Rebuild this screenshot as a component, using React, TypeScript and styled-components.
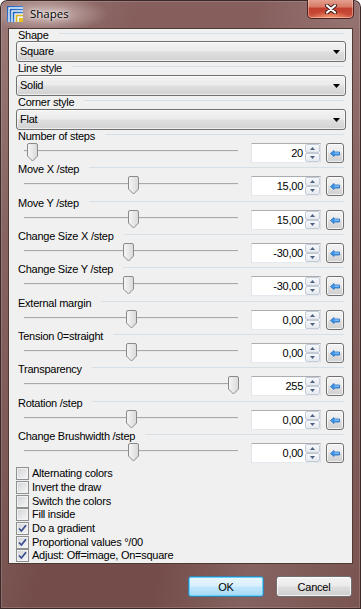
import React from "react";
import styled, { createGlobalStyle } from "styled-components";

const Global = createGlobalStyle`
  html, body { margin: 0; padding: 0; background: #ffffff; }
  * { box-sizing: border-box; }
`;

const UI_FONT = `"Liberation Sans", Arial, sans-serif`;

const Window = styled.div`
  position: relative;
  width: 361px;
  height: 609px;
  display: flex;
  flex-direction: column;
  border-radius: 7px 7px 0 0;
  overflow: hidden;
  background:
    radial-gradient(ellipse 60px 18px at 48px 14px, rgba(235, 220, 218, 0.7), rgba(235, 220, 218, 0) 100%),
    linear-gradient(100deg, rgba(255,255,255,0.16) 0%, rgba(255,255,255,0) 30%, rgba(255,255,255,0) 55%, rgba(255,255,255,0.12) 75%, rgba(255,255,255,0.04) 100%),
    linear-gradient(180deg, #87605e 0%, #77504d 40%, #744d4a 100%);
  box-shadow: inset 0 0 0 1px #3b2927, inset 0 0 0 2px rgba(255, 255, 255, 0.15);
`;

const TitleBar = styled.div`
  height: 28px;
  display: flex;
  align-items: flex-start;
  flex: none;
`;

const AppIcon = styled.svg`
  width: 16px;
  height: 16px;
  margin: 6px 0 0 7px;
  flex: none;
`;

const Title = styled.div`
  margin: 6px 0 0 7px;
  font-family: "Open Sans", "Noto Sans", sans-serif;
  font-size: 11.5px;
  line-height: 16px;
  color: #000;
  text-shadow: 0 0 6px rgba(255, 255, 255, 0.9), 0 0 3px rgba(255, 255, 255, 0.9);
`;

const CloseButton = styled.div`
  margin-left: auto;
  margin-right: 7px;
  width: 47px;
  height: 20px;
  margin-top: -1px;
  border: 1px solid #4e2422;
  border-top: none;
  border-radius: 0 0 5px 5px;
  background:
    radial-gradient(ellipse 20px 7px at 50% 100%, rgba(255, 170, 120, 0.8), rgba(255, 170, 120, 0)),
    linear-gradient(180deg, #e6a595 0%, #d87b68 40%, #c2402f 50%, #c84a36 80%, #d66650 100%);
  box-shadow: inset 0 0 0 1px rgba(255, 220, 210, 0.45);
  display: flex;
  align-items: center;
  justify-content: center;
`;

const Client = styled.div`
  margin: 0 8px;
  height: 536px;
  flex: none;
  border: 1px solid #4f3937;
  background: #f0f0f0;
  display: flex;
  flex-direction: column;
`;

const LabelRow = styled.div<{ $h: number }>`
  height: ${(p) => p.$h}px;
  display: flex;
  align-items: center;
  padding: 0 8px 0 9px;
  flex: none;
`;

const Label = styled.span`
  font-family: ${UI_FONT};
  font-size: 11px;
  line-height: 13px;
  letter-spacing: -0.25px;
  color: #000;
  white-space: nowrap;
`;

const Rule = styled.div`
  flex: 1;
  height: 1px;
  margin-left: 10px;
  margin-bottom: 4px;
  background: #d5dfe5;
`;

const ComboRow = styled.div`
  height: 21px;
  padding: 0 6px 0 7px;
  flex: none;
`;

const Combo = styled.div`
  height: 21px;
  border: 1px solid #707070;
  border-radius: 3px;
  background: linear-gradient(180deg, #f3f3f3 0%, #ebebeb 45%, #dedede 55%, #d2d2d2 100%);
  box-shadow: inset 0 0 0 1px rgba(255, 255, 255, 0.6);
  display: flex;
  align-items: center;
  padding: 0 5px 0 3px;
`;

const ComboText = styled(Label)`
  flex: 1;
`;

const Section = styled.div<{ $h: number }>`
  height: ${(p) => p.$h}px;
  flex: none;
  display: flex;
  flex-direction: column;
`;

const ControlRow = styled.div`
  height: 20px;
  display: flex;
  align-items: flex-start;
  padding-left: 13px;
`;

const SliderBox = styled.div`
  position: relative;
  width: 218px;
  height: 20px;
  flex: none;
`;

const Track = styled.div`
  position: absolute;
  left: 2px;
  right: 2px;
  top: 7px;
  height: 2px;
  border-top: 1px solid #a9a9a9;
  border-bottom: 1px solid #e8e8e8;
`;

const ThumbSvg = styled.svg`
  position: absolute;
  top: 0;
  width: 11px;
  height: 19px;
`;

const SpinBox = styled.div`
  margin-left: 11px;
  width: 70px;
  height: 20px;
  flex: none;
  display: flex;
  background: #fff;
  border: 1px solid;
  border-color: #abadb3 #dbdfe6 #e3e9ef #e2e3ea;
`;

const SpinValue = styled(Label)`
  flex: 1;
  text-align: right;
  line-height: 18px;
  padding-right: 2px;
`;

const SpinButtons = styled.div`
  width: 15px;
  display: flex;
  flex-direction: column;
`;

const SpinButton = styled.div`
  flex: 1;
  border: 1px solid #c3cbd6;
  border-radius: 2px;
  background: linear-gradient(180deg, #f7f8fa 0%, #e6e9ee 100%);
  display: flex;
  align-items: center;
  justify-content: center;
`;

const ResetButton = styled.div`
  margin-left: 5px;
  width: 18px;
  height: 20px;
  flex: none;
  border: 1px solid #707070;
  border-radius: 3px;
  background: linear-gradient(180deg, #f3f3f3 0%, #ebebeb 45%, #dedede 55%, #d0d0d0 100%);
  box-shadow: inset 0 0 0 1px rgba(255, 255, 255, 0.7);
  display: flex;
  align-items: center;
  justify-content: center;
`;

const Checks = styled.div`
  padding-top: 3px;
  display: flex;
  flex-direction: column;
`;

const CheckRow = styled.div<{ $h: number }>`
  height: ${(p) => p.$h}px;
  display: flex;
  align-items: flex-start;
  padding-left: 7px;
`;

const CheckBox = styled.div`
  margin-top: 1px;
  width: 13px;
  height: 13px;
  flex: none;
  border: 1px solid #8e8f8f;
  background: linear-gradient(135deg, #cfd2d6 0%, #e4e5e7 50%, #f7f7f7 100%);
  box-shadow: inset 0 0 0 1px #f2f2f2;
  display: flex;
  align-items: center;
  justify-content: center;
`;

const CheckLabel = styled(Label)`
  margin-left: 3px;
  margin-top: 1px;
`;

const Footer = styled.div`
  flex: 1;
  display: flex;
  justify-content: flex-end;
  align-items: flex-start;
  gap: 12px;
  padding: 12px 9px 0 0;
`;

const DialogButton = styled.div<{ $default?: boolean }>`
  width: 76px;
  height: 21px;
  border: 1px solid ${(p) => (p.$default ? "#3c7fb1" : "#707070")};
  border-radius: 3px;
  background: ${(p) =>
    p.$default
      ? "linear-gradient(180deg, #eaf6fd 0%, #d9f0fc 45%, #bee6fd 55%, #a7d9f5 100%)"
      : "linear-gradient(180deg, #f3f3f3 0%, #ebebeb 45%, #dddddd 55%, #cfcfcf 100%)"};
  box-shadow: inset 0 0 0 1px ${(p) => (p.$default ? "#5fd3ff" : "rgba(255,255,255,0.7)")};
  display: flex;
  align-items: center;
  justify-content: center;
  font-family: ${UI_FONT};
  font-size: 11px;
  letter-spacing: -0.2px;
  color: #000;
`;

const ArrowDown = () => (
  <svg width="7" height="4" viewBox="0 0 7 4">
    <polygon points="0,0 7,0 3.5,4" fill="#000" />
  </svg>
);

const Thumb = ({ left }: { left: number }) => (
  <ThumbSvg viewBox="0 0 11 19" style={{ left }}>
    <defs>
      <linearGradient id="tg" x1="0" y1="0" x2="1" y2="0">
        <stop offset="0" stopColor="#f6f6f6" />
        <stop offset="1" stopColor="#d9d9d9" />
      </linearGradient>
    </defs>
    <path
      d="M0.5,2 Q0.5,0.5 2,0.5 H9 Q10.5,0.5 10.5,2 V13 L5.5,18 L0.5,13 Z"
      fill="url(#tg)"
      stroke="#8a8a8a"
    />
  </ThumbSvg>
);

const SpinArrow = ({ up }: { up?: boolean }) => (
  <svg width="5" height="3" viewBox="0 0 5 3">
    <polygon points={up ? "0,3 5,3 2.5,0" : "0,0 5,0 2.5,3"} fill="#4d6185" />
  </svg>
);

const ResetIcon = () => (
  <svg width="10" height="7" viewBox="0 0 10 7">
    <path d="M0.5,3.5 L4,0.5 V2 H9.5 V5 H4 V6.5 Z" fill="#3d95e8" stroke="#2a6fbf" strokeWidth="0.8" />
    <rect x="4.5" y="2.6" width="4.5" height="1" fill="#a7d3ff" />
  </svg>
);

const CheckMark = () => (
  <svg width="9" height="9" viewBox="0 0 9 9">
    <path d="M1,4.5 L3.4,7 L8,1.2" fill="none" stroke="#3b4f8f" strokeWidth="1.8" />
  </svg>
);

const sliders = [
  { label: "Number of steps", frac: 0, value: "20", h: 33 },
  { label: "Move X /step", frac: 0.5, value: "15,00", h: 34 },
  { label: "Move Y /step", frac: 0.5, value: "15,00", h: 33 },
  { label: "Change Size X /step", frac: 0.48, value: "-30,00", h: 33 },
  { label: "Change Size Y /step", frac: 0.48, value: "-30,00", h: 34 },
  { label: "External margin", frac: 0.495, value: "0,00", h: 33 },
  { label: "Tension 0=straight", frac: 0.495, value: "0,00", h: 33 },
  { label: "Transparency", frac: 1, value: "255", h: 34 },
  { label: "Rotation /step", frac: 0.495, value: "0,00", h: 33 },
  { label: "Change Brushwidth /step", frac: 0.5, value: "0,00", h: 33 },
];

const checks = [
  { label: "Alternating colors", on: false, h: 14 },
  { label: "Invert the draw", on: false, h: 14 },
  { label: "Switch the colors", on: false, h: 13 },
  { label: "Fill inside", on: false, h: 14 },
  { label: "Do a gradient", on: true, h: 14 },
  { label: "Proportional values °/00", on: true, h: 13 },
  { label: "Adjust: Off=image, On=square", on: true, h: 14 },
];

const combos = [
  { label: "Shape", value: "Square", h: 12 },
  { label: "Line style", value: "Solid", h: 13 },
  { label: "Corner style", value: "Flat", h: 13 },
];

export default function App() {
  return (
    <>
      <Global />
      <Window>
        <TitleBar>
          <AppIcon viewBox="0 0 16 16">
            <defs>
              <linearGradient id="ig" x1="0" y1="0" x2="1" y2="1">
                <stop offset="0" stopColor="#1d5fb8" />
                <stop offset="0.6" stopColor="#3f86d8" />
                <stop offset="0.8" stopColor="#e2c22a" />
                <stop offset="1" stopColor="#c89a10" />
              </linearGradient>
            </defs>
            <rect x="0" y="0" width="16" height="16" fill="#eaf2fb" />
            {[0.5, 3.5, 6.5, 9.5].map((o, i) => (
              <path
                key={i}
                d={`M${o},16 V${o} H16`}
                fill="none"
                stroke={i === 3 ? "#d9b41c" : "url(#ig)"}
                strokeWidth="1.6"
              />
            ))}
            <rect x="12" y="12" width="4" height="4" fill="#e5c41f" />
          </AppIcon>
          <Title>Shapes</Title>
          <CloseButton>
            <svg width="12" height="10" viewBox="0 0 12 10">
              <path d="M2,1.5 L10,8.5 M10,1.5 L2,8.5" stroke="#3a1a18" strokeWidth="4" strokeLinecap="round" />
              <path d="M2,1.5 L10,8.5 M10,1.5 L2,8.5" stroke="#ffffff" strokeWidth="2.2" strokeLinecap="round" />
            </svg>
          </CloseButton>
        </TitleBar>
        <Client>
          {combos.map((c) => (
            <React.Fragment key={c.label}>
              <LabelRow $h={c.h}>
                <Label>{c.label}</Label>
                <Rule />
              </LabelRow>
              <ComboRow>
                <Combo>
                  <ComboText>{c.value}</ComboText>
                  <ArrowDown />
                </Combo>
              </ComboRow>
            </React.Fragment>
          ))}
          {sliders.map((s) => (
            <Section key={s.label} $h={s.h}>
              <LabelRow $h={13}>
                <Label>{s.label}</Label>
                <Rule />
              </LabelRow>
              <ControlRow>
                <SliderBox>
                  <Track />
                  <Thumb left={Math.round(5 + s.frac * 201)} />
                </SliderBox>
                <SpinBox>
                  <SpinValue>{s.value}</SpinValue>
                  <SpinButtons>
                    <SpinButton>
                      <SpinArrow up />
                    </SpinButton>
                    <SpinButton>
                      <SpinArrow />
                    </SpinButton>
                  </SpinButtons>
                </SpinBox>
                <ResetButton>
                  <ResetIcon />
                </ResetButton>
              </ControlRow>
            </Section>
          ))}
          <Checks>
            {checks.map((c) => (
              <CheckRow key={c.label} $h={c.h}>
                <CheckBox>{c.on && <CheckMark />}</CheckBox>
                <CheckLabel>{c.label}</CheckLabel>
              </CheckRow>
            ))}
          </Checks>
        </Client>
        <Footer>
          <DialogButton $default>OK</DialogButton>
          <DialogButton>Cancel</DialogButton>
        </Footer>
      </Window>
    </>
  );
}
